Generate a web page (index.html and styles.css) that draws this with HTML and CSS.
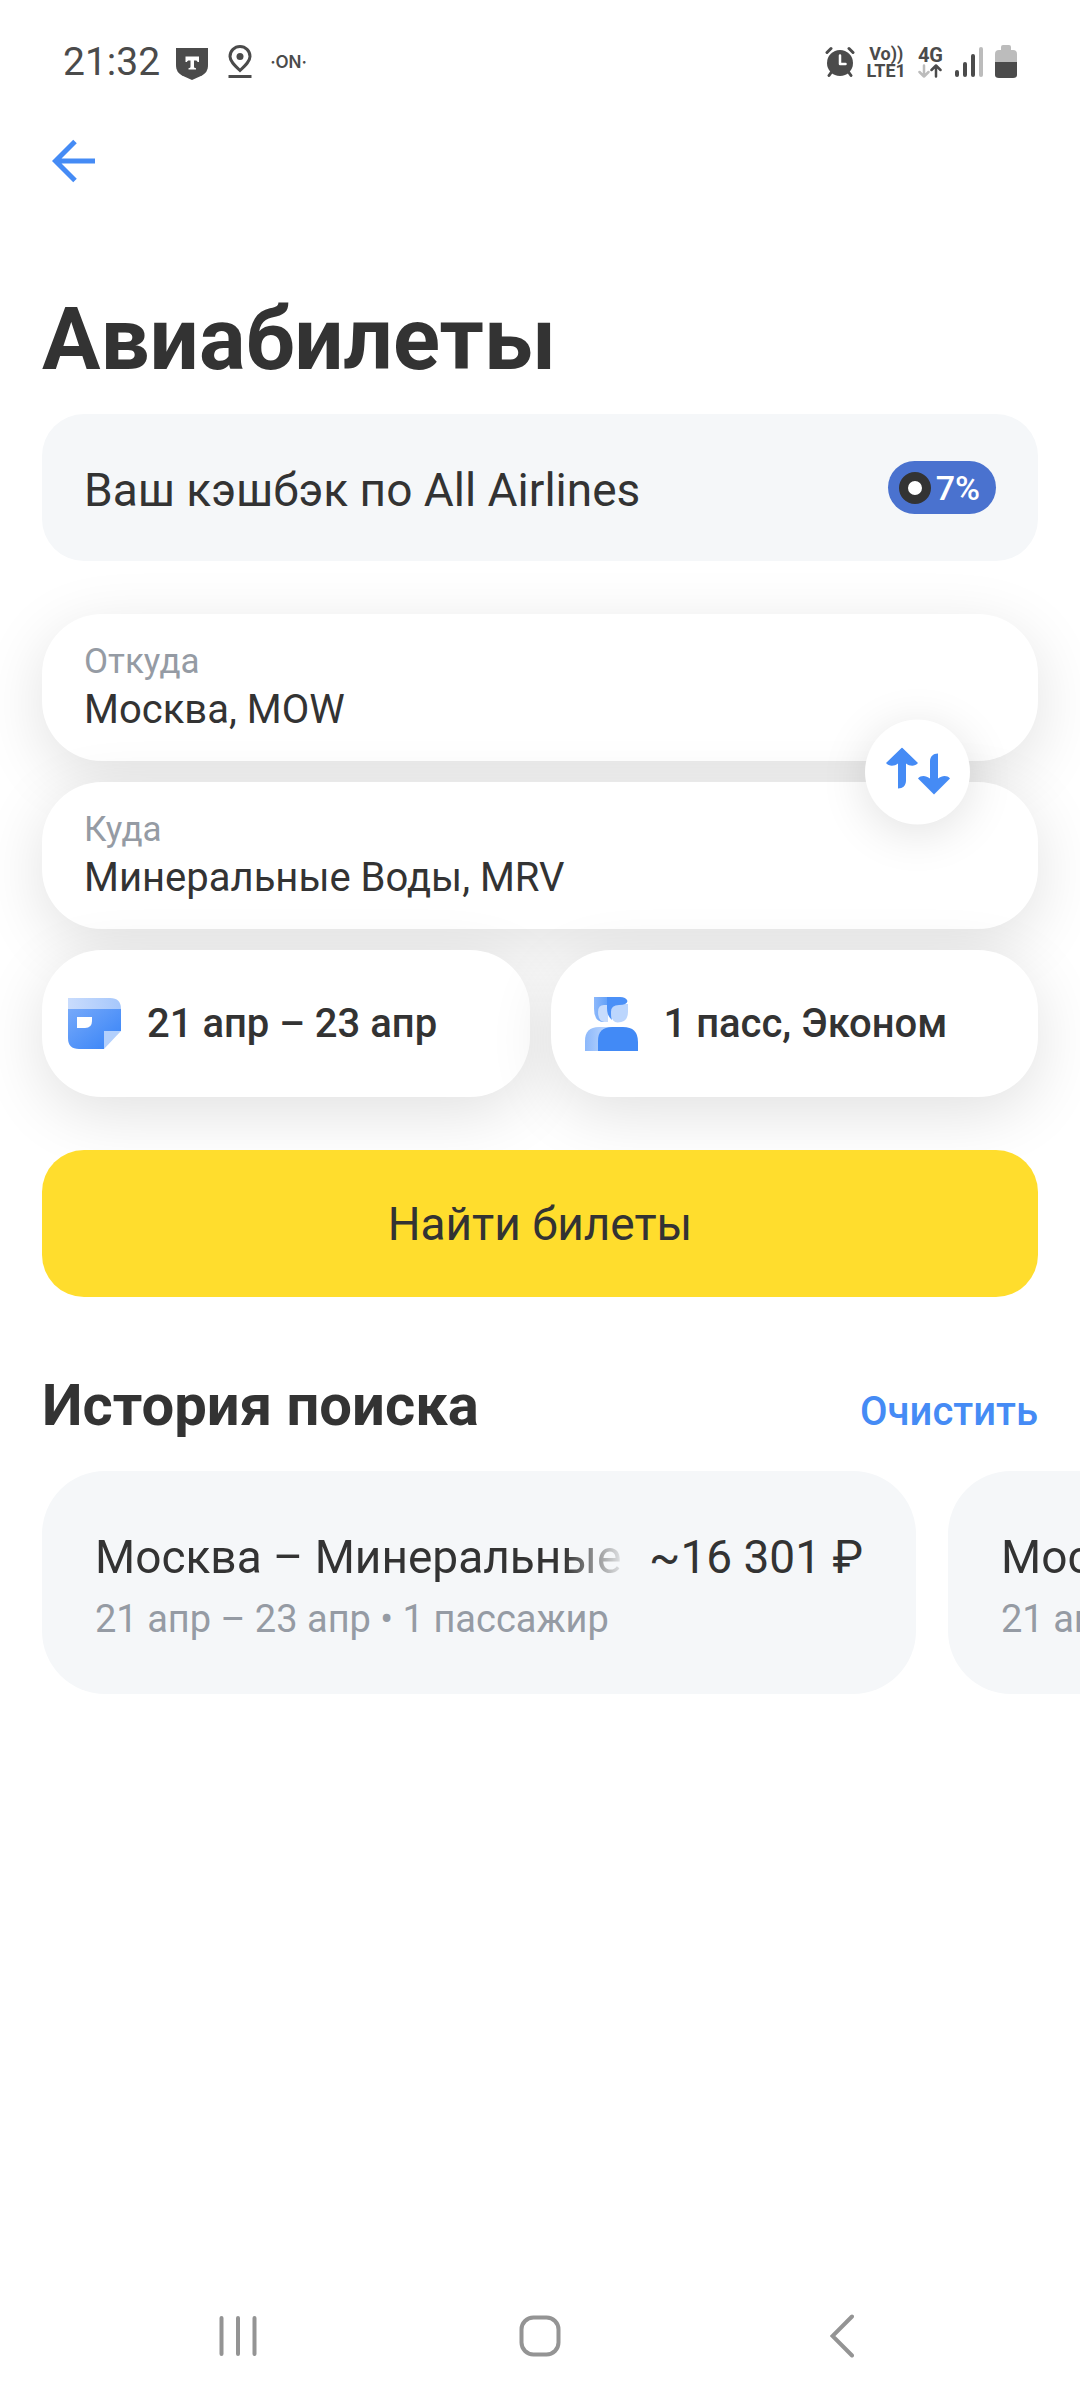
FILE: index.html
```html
<!DOCTYPE html>
<html lang="ru">
<head>
<meta charset="utf-8">
<meta name="viewport" content="width=device-width, initial-scale=1">
<title>Авиабилеты</title>
<link rel="stylesheet" href="styles.css">
</head>
<body>
<div class="status">
  <div class="status-left">
    <span class="clock">21:32</span>
    <svg class="shield" width="32" height="32" viewBox="0 0 32 32" aria-hidden="true">
      <path fill="#4b4b4b" d="M0 0h32v17c0 5-2 8-6 10.500L16 32 6 27.500C2 25 0 22 0 17z"/>
      <path fill="#fff" d="M9.500 8.500h13.500v5.500h-1.500c-.2-1-.8-1.500-2-1.500H18v6c0 1.200.6 1.600 2 1.800v1.200h-7.500v-1.200c1.400-.2 2-.6 2-1.800v-6h-1.500c-1.200 0-1.800.5-2 1.500H9.500z"/>
    </svg>
    <svg class="pin" width="24" height="34" viewBox="0 0 24 34" fill="none" stroke="#4b4b4b" aria-hidden="true">
      <path stroke-width="3" d="M12 25.500C6 20 2 16 2 11.500a10 10 0 0 1 20 0C22 16 18 20 12 25.500z"/>
      <circle cx="12" cy="11.500" r="3.500" fill="#4b4b4b" stroke="none"/>
      <path stroke-width="3" d="M.5 31.500h23"/>
    </svg>
    <span class="on">·ON·</span>
  </div>
  <div class="status-right">
    <svg width="30" height="32" viewBox="0 0 30 32" aria-hidden="true">
      <circle cx="15" cy="17" r="13" fill="#4b4b4b"/>
      <path stroke="#4b4b4b" stroke-width="3" stroke-linecap="round" fill="none" d="M2 6.500l4-4M28 6.500l-4-4M6.500 26L4 29.500M23.500 26l2.500 3.500"/>
      <path stroke="#fff" stroke-width="2.500" stroke-linecap="round" stroke-linejoin="round" fill="none" d="M15 9.500v8.500h5.500"/>
    </svg>
    <div class="net"><span>Vo))</span><span>LTE1</span></div>
    <div class="net net-4g">
      <span>4G</span>
      <svg width="24" height="14" viewBox="0 0 24 14" fill="none" stroke-width="2.500" stroke-linecap="round" stroke-linejoin="round" aria-hidden="true">
        <path stroke="#bcbcbc" d="M6 1.500v11M1.500 8L6 12.500 10.500 8"/>
        <path stroke="#4b4b4b" d="M18 12.500v-11M13.500 6L18 1.500 22.500 6"/>
      </svg>
    </div>
    <svg width="28" height="30" viewBox="0 0 28 30" aria-hidden="true">
      <g fill="#4b4b4b"><rect y="23" width="4" height="7" rx="2"/><rect x="8" y="15" width="4" height="15" rx="2"/><rect x="16" y="7" width="4" height="23" rx="2"/></g>
      <rect x="24" width="4" height="30" rx="2" fill="#bcbcbc"/>
    </svg>
    <svg width="22" height="34" viewBox="0 0 22 34" aria-hidden="true">
      <path fill="#bcbcbc" d="M8 0h6q2 0 2 2v3h2q4 0 4 4v9H0V9q0-4 4-4h2V2q0-2 2-2z"/>
      <path fill="#4b4b4b" d="M0 17h22v13q0 3-4 3H4q-4 0-4-3z"/>
    </svg>
  </div>
</div>

<header class="topbar">
  <button class="back" type="button" aria-label="Назад">
    <svg width="44" height="44" viewBox="0 0 44 44" fill="none" stroke="#458bf5" stroke-width="5" aria-hidden="true">
      <path d="M43 22H4M23 2.500L3.500 22 23 41.500"/>
    </svg>
  </button>
</header>

<main>
  <h1>Авиабилеты</h1>

  <section class="cashback">
    <span class="cashback-text">Ваш кэшбэк по All Airlines</span>
    <span class="badge"><i class="dot"></i>7%</span>
  </section>

  <form class="search">
    <div class="route">
      <label class="field"><span>Откуда</span><input type="text" value="Москва, MOW"></label>
      <label class="field"><span>Куда</span><input type="text" value="Минеральные Воды, MRV"></label>
      <button class="swap" type="button" aria-label="Поменять местами">
        <svg width="64" height="48" viewBox="0 0 64 48" fill="#458bf5" aria-hidden="true">
          <path d="M16 0l16 15.500c-3 3.500-8 3.500-12 .5v17c0 5-3 8-8 8V16c-4 3-9 3-12-.5z"/>
          <path d="M48 47L32 31c3-3.500 8-3 12 0V14c0-5 3-8 8-8v25c4-3 9-3.500 12 0z"/>
        </svg>
      </button>
    </div>
    <div class="options">
      <button class="option option-dates" type="button">
        <svg width="53" height="52" viewBox="0 0 53 52" aria-hidden="true">
          <defs>
            <linearGradient id="cal-body" x1="0" y1="0" x2="1" y2="1"><stop offset="0" stop-color="#76a9fa"/><stop offset="1" stop-color="#3582f7"/></linearGradient>
            <linearGradient id="cal-top"><stop offset="0" stop-color="#c9dcfd"/><stop offset="1" stop-color="#a6c7fb"/></linearGradient>
          </defs>
          <path fill="url(#cal-top)" d="M0 0h42q11 0 11 11H0z"/>
          <path fill="url(#cal-body)" d="M0 11h53v22H36v18H11Q0 51 0 40z"/>
          <path fill="#b3d0fc" d="M36 33h17L36 51z"/>
          <path fill="#fff" d="M9 19h15v4q0 7-7 7H9z"/>
        </svg>
        <span>21 апр – 23 апр</span>
      </button>
      <button class="option option-people" type="button">
        <svg width="53" height="54" viewBox="0 0 53 54" aria-hidden="true">
          <defs>
            <linearGradient id="p-side"><stop offset="0" stop-color="#8cb8fb"/><stop offset="1" stop-color="#c3dafd"/></linearGradient>
            <linearGradient id="p-hair"><stop offset="0" stop-color="#8cb8fb"/><stop offset="1" stop-color="#62a0f8"/></linearGradient>
          </defs>
          <path fill="url(#p-hair)" d="M9 0h14v25h-4Q9 25 9 12z"/>
          <path fill="#c7dcfd" d="M13 15q0-7 6-7h4v17h-4q-6-1-6-10z"/>
          <path fill="#bcd6fd" d="M26 15q0-8 8-8h9v8q0 10.500-10.500 10.500Q26 25 26 15z"/>
          <path fill="#4b90f7" d="M22 0h13q6 0 7.500 4Q42 8 34 8q-8 0-8 7 0 4 1 8-5-4-5-12z"/>
          <path fill="url(#p-side)" d="M0 54V44q0-14 14-14h12v24z"/>
          <path fill="#428af6" d="M13 54V44q0-14 14-14h11q15 0 15 15v9z"/>
        </svg>
        <span>1 пасс, Эконом</span>
      </button>
    </div>
    <button class="submit" type="submit">Найти билеты</button>
  </form>

  <section class="history">
    <div class="history-head">
      <h2>История поиска</h2>
      <button class="clear" type="button">Очистить</button>
    </div>
    <div class="cards">
      <article class="card">
        <div class="card-top"><span class="card-route">Москва – Минеральные</span><span>~16 301 ₽</span></div>
        <p>21 апр – 23 апр • 1 пассажир</p>
      </article>
      <article class="card">
        <div class="card-top"><span class="card-route">Москва</span></div>
        <p>21 апр – 23 апр</p>
      </article>
    </div>
  </section>
</main>

<nav class="sysnav" aria-label="Системная навигация">
  <button type="button" aria-label="Недавние">
    <svg width="38" height="42" viewBox="0 0 38 42" stroke="#949494" stroke-width="4" stroke-linecap="round" aria-hidden="true"><path d="M2.500 3v36M19 3v36M35.500 3v36"/></svg>
  </button>
  <button type="button" aria-label="Домой">
    <svg width="42" height="42" viewBox="0 0 42 42" fill="none" stroke="#949494" stroke-width="4" aria-hidden="true"><rect x="2.500" y="2.500" width="37" height="37" rx="12"/></svg>
  </button>
  <button type="button" aria-label="Назад">
    <svg width="24" height="44" viewBox="0 0 24 44" fill="none" stroke="#949494" stroke-width="4" stroke-linecap="round" aria-hidden="true"><path d="M22 2.500L2.500 22 22 41.500"/></svg>
  </button>
</nav>
</body>
</html>
```
FILE: styles.css
```css
* {
  box-sizing: border-box;
}

body {
  margin: 0;
  min-height: 100vh;
  display: flex;
  flex-direction: column;
  overflow-x: hidden;
  background: #fff;
  color: #333;
  font-family: Roboto, "Noto Sans", sans-serif;
}

button,
input {
  margin: 0;
  padding: 0;
  border: 0;
  background: none;
  color: inherit;
  font: inherit;
}

svg {
  display: block;
  flex: none;
}

h1,
h2,
p {
  margin: 0;
}

.status {
  display: flex;
  justify-content: space-between;
  align-items: center;
  height: 122px;
  padding: 2px 63px 0;
  color: #4b4b4b;
}

.status-left,
.status-right {
  display: flex;
  align-items: center;
}

.status-left {
  gap: 18px;
}

.status-right {
  gap: 12px;
}

.clock {
  font-size: 39px;
  line-height: 48px;
}

.shield {
  margin: 4px 2px 0 -2px;
}

.on {
  font: 600 17px/20px Inter, sans-serif;
}

.net {
  display: flex;
  flex-direction: column;
  align-items: center;
  font-weight: 700;
  font-size: 18px;
  line-height: 17px;
}

.net-4g {
  font-size: 20px;
}

.topbar {
  display: flex;
  align-items: center;
  height: 78px;
  padding: 0 52px;
}

main {
  padding: 87px 42px 0;
}

h1 {
  margin-bottom: 23px;
  font-weight: 700;
  font-size: 87px;
  line-height: 104px;
}

.cashback {
  display: flex;
  justify-content: space-between;
  align-items: center;
  min-height: 147px;
  padding: 0 42px;
  border-radius: 42px;
  background: #f5f7f9;
}

.cashback-text {
  padding-top: 4px;
  font-size: 46px;
  line-height: 56px;
}

.badge {
  display: flex;
  align-items: center;
  gap: 5px;
  height: 53px;
  padding: 0 16px 0 11px;
  border-radius: 27px;
  background: #4a72cf;
  color: #fff;
  font-weight: 500;
  font-size: 34px;
}

.dot {
  width: 32px;
  height: 32px;
  border: 9px solid #333;
  border-radius: 50%;
  background: #fff;
}

.search {
  margin-top: 53px;
}

.route {
  position: relative;
  display: flex;
  flex-direction: column;
  gap: 21px;
}

.field,
.option {
  border-radius: 60px;
  background: #fff;
  box-shadow: 0 16px 64px rgba(0, 0, 0, 0.12);
}

.field {
  display: flex;
  flex-direction: column;
  padding: 27px 42px 26px;
}

.field span {
  color: #959ba4;
  font-size: 35px;
  line-height: 42px;
}

.field input {
  width: 100%;
  height: 52px;
  font-size: 40px;
}

.swap {
  position: absolute;
  top: 50%;
  right: 68px;
  display: grid;
  place-items: center;
  width: 105px;
  height: 105px;
  border-radius: 50%;
  background: #fff;
  box-shadow: 0 8px 48px rgba(0, 0, 0, 0.12);
  transform: translateY(-50%);
}

.options {
  position: relative;
  display: grid;
  grid-template-columns: 1fr 1fr;
  gap: 21px;
  margin-top: 21px;
}

.option {
  display: flex;
  align-items: center;
  gap: 26px;
  min-height: 147px;
  font-weight: 500;
  font-size: 40px;
}

.option-dates {
  padding-left: 26px;
}

.option-people {
  padding-left: 34px;
}

.submit {
  position: relative;
  width: 100%;
  min-height: 147px;
  margin-top: 53px;
  border-radius: 42px;
  background: #ffdd2d;
  font-size: 46px;
}

.history-head {
  display: flex;
  justify-content: space-between;
  align-items: baseline;
  margin: 73px 0 31px;
}

h2 {
  font-weight: 700;
  font-size: 58px;
  line-height: 70px;
}

.clear {
  color: #458bf5;
  font-weight: 500;
  font-size: 40px;
}

.cards {
  display: flex;
  gap: 32px;
  margin-right: -42px;
  overflow: hidden;
}

.card {
  flex: none;
  width: 874px;
  padding: 58px 53px 51px;
  border-radius: 63px;
  background: #f5f7f9;
}

.card-top {
  display: flex;
  gap: 21px;
  font-size: 46px;
  line-height: 56px;
  white-space: nowrap;
}

.card-route {
  flex: 1;
  overflow: hidden;
  -webkit-mask-image: linear-gradient(to left, transparent, #000 64px);
  mask-image: linear-gradient(to left, transparent, #000 64px);
}

.card p {
  margin-top: 10px;
  color: #959ba4;
  font-size: 38px;
  line-height: 48px;
}

.sysnav {
  display: grid;
  grid-template-columns: repeat(3, 1fr);
  height: 128px;
  margin-top: auto;
  padding: 0 87px;
}

.sysnav button {
  display: grid;
  place-items: center;
}
```
